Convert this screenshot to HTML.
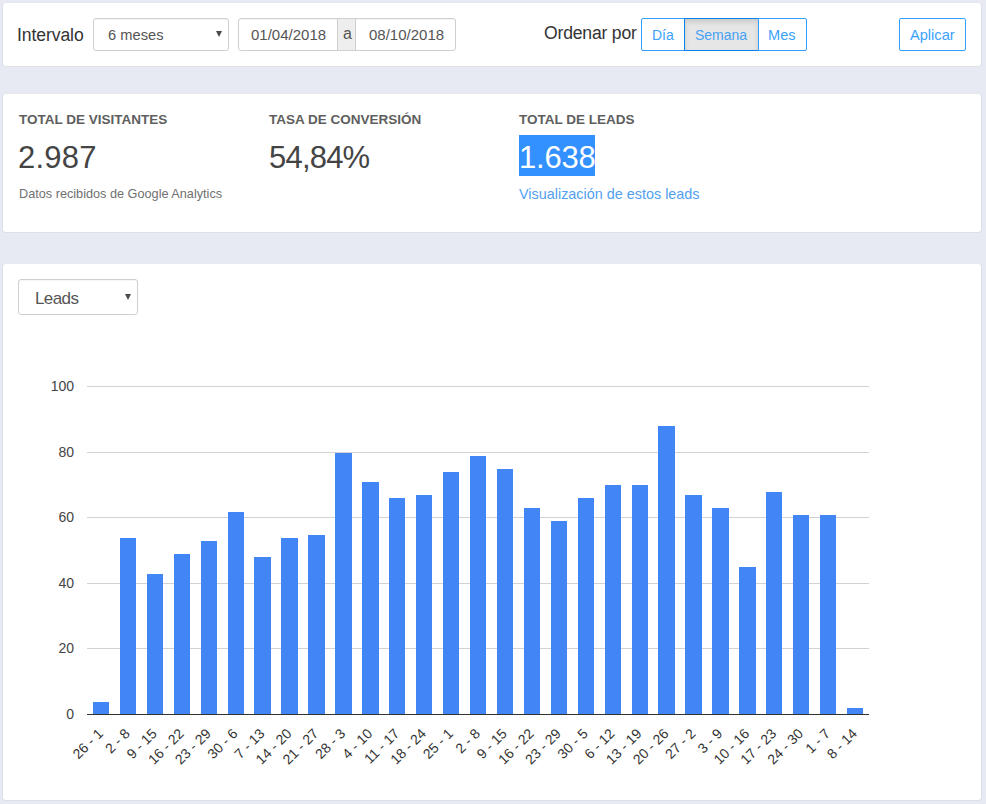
<!DOCTYPE html>
<html><head><meta charset="utf-8">
<style>
*{box-sizing:border-box;margin:0;padding:0}
html,body{width:986px;height:804px;overflow:hidden;background:#e7eaf2;font-family:"Liberation Sans",sans-serif;color:#333}
.abs{position:absolute}
.panel{position:absolute;left:2px;width:980px;background:#fff;border:1px solid #dde1e7;border-top-color:#e5e8ef;border-radius:4px}
.ctl{position:absolute;border:1px solid #cfcfcf;background:#fff;border-radius:3px;box-shadow:inset 0 1px 1px rgba(0,0,0,.04)}
.txt{position:absolute;white-space:nowrap;line-height:1}
.arrow{position:absolute;width:0;height:0;border-left:3px solid transparent;border-right:3px solid transparent;border-top:6px solid #4a4a4a}
.btn{position:absolute;border:1px solid #34a0fd;color:#3aa2fc;font-size:14px;text-align:center;background:#fff}
</style></head><body>
<div class="panel" style="top:2px;height:65px"></div>
<div class="panel" style="top:93px;height:140px"></div>
<div class="panel" style="top:263px;height:538px"></div>

<div class="txt" style="left:17px;top:27px;font-size:17.6px;letter-spacing:-0.1px;color:#333">Intervalo</div>
<div class="ctl" style="left:93px;top:18px;width:136px;height:33px"></div>
<div class="txt" style="left:108px;top:28px;font-size:14.7px;color:#555">6 meses</div>
<div class="arrow" style="left:216px;top:31px"></div>

<div class="ctl" style="left:238px;top:18px;width:218px;height:33px"></div>
<div class="abs" style="left:337px;top:19px;width:19px;height:31px;background:#eeeeee;border-left:1px solid #cfcfcf;border-right:1px solid #cfcfcf"></div>
<div class="txt" style="left:251px;top:27px;font-size:15px;color:#555">01/04/2018</div>
<div class="txt" style="left:343px;top:26px;font-size:16px;color:#555">a</div>
<div class="txt" style="left:369px;top:27px;font-size:15px;color:#555">08/10/2018</div>

<div class="txt" style="left:544px;top:25px;font-size:17.6px;letter-spacing:-0.2px;color:#333">Ordenar por</div>
<div class="btn" style="left:641px;top:18px;width:44px;height:33px;border-radius:2px 0 0 2px"></div>
<div class="btn" style="left:684px;top:18px;width:75px;height:33px;background:#e6e6e6;box-shadow:inset 0 3px 5px rgba(0,0,0,.125);border-color:#0880ef"></div>
<div class="btn" style="left:758px;top:18px;width:49px;height:33px;border-radius:0 2px 2px 0"></div>
<div class="txt" style="left:652px;top:28px;font-size:14px;color:#3aa2fc">Día</div>
<div class="txt" style="left:695px;top:28px;font-size:14px;color:#46a2f6">Semana</div>
<div class="txt" style="left:768px;top:28px;font-size:14.6px;color:#3aa2fc">Mes</div>

<div class="btn" style="left:899px;top:18px;width:67px;height:33px;border-radius:2px"></div>
<div class="txt" style="left:910px;top:28px;font-size:14.6px;color:#3aa2fc">Aplicar</div>

<div class="txt" style="left:19px;top:113px;font-size:13.5px;font-weight:bold;color:#5e5e5e">TOTAL DE VISITANTES</div>
<div class="txt" style="left:18px;top:142px;font-size:31px;letter-spacing:0.2px;color:#444">2.987</div>
<div class="txt" style="left:19px;top:188px;font-size:12.7px;color:#707070">Datos recibidos de Google Analytics</div>

<div class="txt" style="left:269px;top:113px;font-size:13.5px;font-weight:bold;color:#5e5e5e">TASA DE CONVERSIÓN</div>
<div class="txt" style="left:269px;top:142px;font-size:31px;letter-spacing:-0.8px;color:#444">54,84%</div>

<div class="txt" style="left:519px;top:113px;font-size:13.5px;font-weight:bold;color:#5e5e5e">TOTAL DE LEADS</div>
<div class="abs" style="left:519px;top:135px;width:76px;height:41px;background:#3390ff"></div>
<div class="txt" style="left:519px;top:142px;font-size:31px;letter-spacing:-0.2px;color:#fff">1.638</div>
<div class="txt" style="left:519px;top:187px;font-size:14.4px;color:#529ff0">Visualización de estos leads</div>

<div class="ctl" style="left:18px;top:279px;width:120px;height:36px"></div>
<div class="txt" style="left:35px;top:290px;font-size:17px;letter-spacing:-0.6px;color:#555">Leads</div>
<div class="arrow" style="left:125px;top:294px"></div>

<svg width="986" height="804" style="position:absolute;left:0;top:0">
<rect x="87" y="648" width="782" height="1" fill="#d2d2d2"/>
<text x="74" y="653" text-anchor="end" font-family="Liberation Sans" font-size="14" fill="#444444">20</text>
<rect x="87" y="583" width="782" height="1" fill="#d2d2d2"/>
<text x="74" y="588" text-anchor="end" font-family="Liberation Sans" font-size="14" fill="#444444">40</text>
<rect x="87" y="517" width="782" height="1" fill="#d2d2d2"/>
<text x="74" y="522" text-anchor="end" font-family="Liberation Sans" font-size="14" fill="#444444">60</text>
<rect x="87" y="452" width="782" height="1" fill="#d2d2d2"/>
<text x="74" y="457" text-anchor="end" font-family="Liberation Sans" font-size="14" fill="#444444">80</text>
<rect x="87" y="386" width="782" height="1" fill="#d2d2d2"/>
<text x="74" y="391" text-anchor="end" font-family="Liberation Sans" font-size="14" fill="#444444">100</text>
<text x="74" y="719" text-anchor="end" font-family="Liberation Sans" font-size="14" fill="#444444">0</text>
<rect x="93" y="702" width="16" height="13" fill="#4285f4"/>
<rect x="120" y="538" width="16" height="177" fill="#4285f4"/>
<rect x="147" y="574" width="16" height="141" fill="#4285f4"/>
<rect x="174" y="554" width="16" height="161" fill="#4285f4"/>
<rect x="201" y="541" width="16" height="174" fill="#4285f4"/>
<rect x="228" y="512" width="16" height="203" fill="#4285f4"/>
<rect x="254" y="557" width="17" height="158" fill="#4285f4"/>
<rect x="281" y="538" width="17" height="177" fill="#4285f4"/>
<rect x="308" y="535" width="17" height="180" fill="#4285f4"/>
<rect x="335" y="453" width="17" height="262" fill="#4285f4"/>
<rect x="362" y="482" width="17" height="233" fill="#4285f4"/>
<rect x="389" y="498" width="16" height="217" fill="#4285f4"/>
<rect x="416" y="495" width="16" height="220" fill="#4285f4"/>
<rect x="443" y="472" width="16" height="243" fill="#4285f4"/>
<rect x="470" y="456" width="16" height="259" fill="#4285f4"/>
<rect x="497" y="469" width="16" height="246" fill="#4285f4"/>
<rect x="524" y="508" width="16" height="207" fill="#4285f4"/>
<rect x="551" y="521" width="16" height="194" fill="#4285f4"/>
<rect x="578" y="498" width="16" height="217" fill="#4285f4"/>
<rect x="605" y="485" width="16" height="230" fill="#4285f4"/>
<rect x="632" y="485" width="16" height="230" fill="#4285f4"/>
<rect x="658" y="426" width="17" height="289" fill="#4285f4"/>
<rect x="685" y="495" width="17" height="220" fill="#4285f4"/>
<rect x="712" y="508" width="17" height="207" fill="#4285f4"/>
<rect x="739" y="567" width="17" height="148" fill="#4285f4"/>
<rect x="766" y="492" width="16" height="223" fill="#4285f4"/>
<rect x="793" y="515" width="16" height="200" fill="#4285f4"/>
<rect x="820" y="515" width="16" height="200" fill="#4285f4"/>
<rect x="847" y="708" width="16" height="7" fill="#4285f4"/>
<rect x="87" y="714" width="782" height="1" fill="#333333"/>
<text x="103.95" y="734.40" text-anchor="end" transform="rotate(-45 103.95 734.40)" font-family="Liberation Sans" font-size="14" fill="#333333">26 - 1</text>
<text x="130.88" y="734.40" text-anchor="end" transform="rotate(-45 130.88 734.40)" font-family="Liberation Sans" font-size="14" fill="#333333">2 - 8</text>
<text x="157.81" y="734.40" text-anchor="end" transform="rotate(-45 157.81 734.40)" font-family="Liberation Sans" font-size="14" fill="#333333">9 - 15</text>
<text x="184.74" y="734.40" text-anchor="end" transform="rotate(-45 184.74 734.40)" font-family="Liberation Sans" font-size="14" fill="#333333">16 - 22</text>
<text x="211.67" y="734.40" text-anchor="end" transform="rotate(-45 211.67 734.40)" font-family="Liberation Sans" font-size="14" fill="#333333">23 - 29</text>
<text x="238.60" y="734.40" text-anchor="end" transform="rotate(-45 238.60 734.40)" font-family="Liberation Sans" font-size="14" fill="#333333">30 - 6</text>
<text x="265.53" y="734.40" text-anchor="end" transform="rotate(-45 265.53 734.40)" font-family="Liberation Sans" font-size="14" fill="#333333">7 - 13</text>
<text x="292.46" y="734.40" text-anchor="end" transform="rotate(-45 292.46 734.40)" font-family="Liberation Sans" font-size="14" fill="#333333">14 - 20</text>
<text x="319.39" y="734.40" text-anchor="end" transform="rotate(-45 319.39 734.40)" font-family="Liberation Sans" font-size="14" fill="#333333">21 - 27</text>
<text x="346.32" y="734.40" text-anchor="end" transform="rotate(-45 346.32 734.40)" font-family="Liberation Sans" font-size="14" fill="#333333">28 - 3</text>
<text x="373.25" y="734.40" text-anchor="end" transform="rotate(-45 373.25 734.40)" font-family="Liberation Sans" font-size="14" fill="#333333">4 - 10</text>
<text x="400.18" y="734.40" text-anchor="end" transform="rotate(-45 400.18 734.40)" font-family="Liberation Sans" font-size="14" fill="#333333">11 - 17</text>
<text x="427.11" y="734.40" text-anchor="end" transform="rotate(-45 427.11 734.40)" font-family="Liberation Sans" font-size="14" fill="#333333">18 - 24</text>
<text x="454.04" y="734.40" text-anchor="end" transform="rotate(-45 454.04 734.40)" font-family="Liberation Sans" font-size="14" fill="#333333">25 - 1</text>
<text x="480.97" y="734.40" text-anchor="end" transform="rotate(-45 480.97 734.40)" font-family="Liberation Sans" font-size="14" fill="#333333">2 - 8</text>
<text x="507.90" y="734.40" text-anchor="end" transform="rotate(-45 507.90 734.40)" font-family="Liberation Sans" font-size="14" fill="#333333">9 - 15</text>
<text x="534.83" y="734.40" text-anchor="end" transform="rotate(-45 534.83 734.40)" font-family="Liberation Sans" font-size="14" fill="#333333">16 - 22</text>
<text x="561.76" y="734.40" text-anchor="end" transform="rotate(-45 561.76 734.40)" font-family="Liberation Sans" font-size="14" fill="#333333">23 - 29</text>
<text x="588.69" y="734.40" text-anchor="end" transform="rotate(-45 588.69 734.40)" font-family="Liberation Sans" font-size="14" fill="#333333">30 - 5</text>
<text x="615.62" y="734.40" text-anchor="end" transform="rotate(-45 615.62 734.40)" font-family="Liberation Sans" font-size="14" fill="#333333">6 - 12</text>
<text x="642.55" y="734.40" text-anchor="end" transform="rotate(-45 642.55 734.40)" font-family="Liberation Sans" font-size="14" fill="#333333">13 - 19</text>
<text x="669.48" y="734.40" text-anchor="end" transform="rotate(-45 669.48 734.40)" font-family="Liberation Sans" font-size="14" fill="#333333">20 - 26</text>
<text x="696.41" y="734.40" text-anchor="end" transform="rotate(-45 696.41 734.40)" font-family="Liberation Sans" font-size="14" fill="#333333">27 - 2</text>
<text x="723.34" y="734.40" text-anchor="end" transform="rotate(-45 723.34 734.40)" font-family="Liberation Sans" font-size="14" fill="#333333">3 - 9</text>
<text x="750.27" y="734.40" text-anchor="end" transform="rotate(-45 750.27 734.40)" font-family="Liberation Sans" font-size="14" fill="#333333">10 - 16</text>
<text x="777.20" y="734.40" text-anchor="end" transform="rotate(-45 777.20 734.40)" font-family="Liberation Sans" font-size="14" fill="#333333">17 - 23</text>
<text x="804.13" y="734.40" text-anchor="end" transform="rotate(-45 804.13 734.40)" font-family="Liberation Sans" font-size="14" fill="#333333">24 - 30</text>
<text x="831.06" y="734.40" text-anchor="end" transform="rotate(-45 831.06 734.40)" font-family="Liberation Sans" font-size="14" fill="#333333">1 - 7</text>
<text x="857.99" y="734.40" text-anchor="end" transform="rotate(-45 857.99 734.40)" font-family="Liberation Sans" font-size="14" fill="#333333">8 - 14</text>
</svg>
</body></html>
